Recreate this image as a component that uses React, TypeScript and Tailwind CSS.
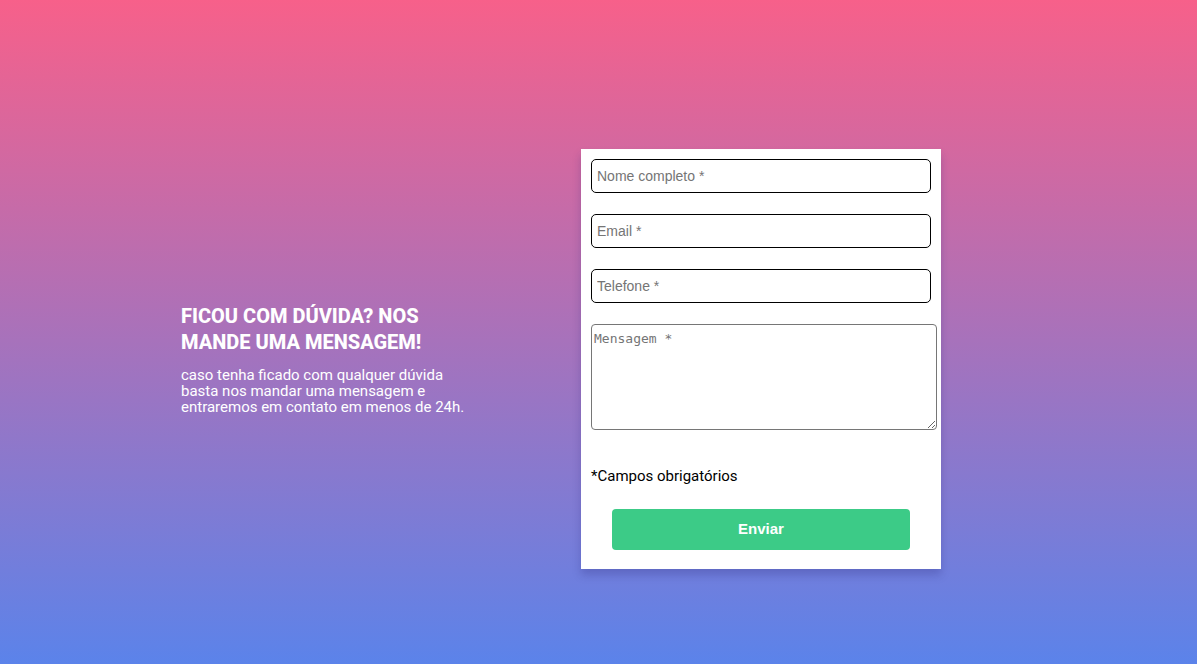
export default function App() {
  return (
    <div className="min-h-screen w-full bg-[linear-gradient(to_bottom,#f7608a,#5b83ea)] flex items-center pl-[181px] pt-[53px] font-['Roboto',sans-serif]">
      <div className="w-[400px] text-white">
        <h2 className="w-[290px] text-[20px] font-extrabold leading-[26px] uppercase">
          Ficou com dúvida? Nos mande uma mensagem!
        </h2>
        <p className="w-[290px] mt-[12px] text-[15px] leading-[16px]">
          caso tenha ficado com qualquer dúvida basta nos mandar uma mensagem e entraremos em contato em menos de 24h.
        </p>
      </div>
      <form className="w-[360px] bg-white p-[10px] pb-[19px] shadow-[0_6px_8px_rgba(40,40,120,0.25)]">
        <input
          placeholder="Nome completo *"
          className="block w-[340px] h-[34px] border border-black rounded-[5px] px-[5px] text-[14px] font-['Liberation_Sans',sans-serif] placeholder:text-[#757575] outline-none"
        />
        <input
          placeholder="Email *"
          className="block mt-[21px] w-[340px] h-[34px] border border-black rounded-[5px] px-[5px] text-[14px] font-['Liberation_Sans',sans-serif] placeholder:text-[#757575] outline-none"
        />
        <input
          placeholder="Telefone *"
          className="block mt-[21px] w-[340px] h-[34px] border border-black rounded-[5px] px-[5px] text-[14px] font-['Liberation_Sans',sans-serif] placeholder:text-[#757575] outline-none"
        />
        <textarea
          placeholder="Mensagem *"
          className="block mt-[21px] w-[346px] h-[106px] border border-[#767676] rounded-[4px] px-[2px] py-[6px] text-[13px] leading-[15px] font-['DejaVu_Sans_Mono',monospace] placeholder:text-[#757575] outline-none"
        />
        <p className="mt-[37px] text-[15px] leading-[18px] text-black">*Campos obrigatórios</p>
        <button
          type="button"
          className="block mx-auto mt-[24px] w-[298px] h-[41px] rounded-[4px] bg-[#3ccb87] text-white text-[15px] font-bold font-['Liberation_Sans',sans-serif]"
        >
          Enviar
        </button>
      </form>
    </div>
  );
}
